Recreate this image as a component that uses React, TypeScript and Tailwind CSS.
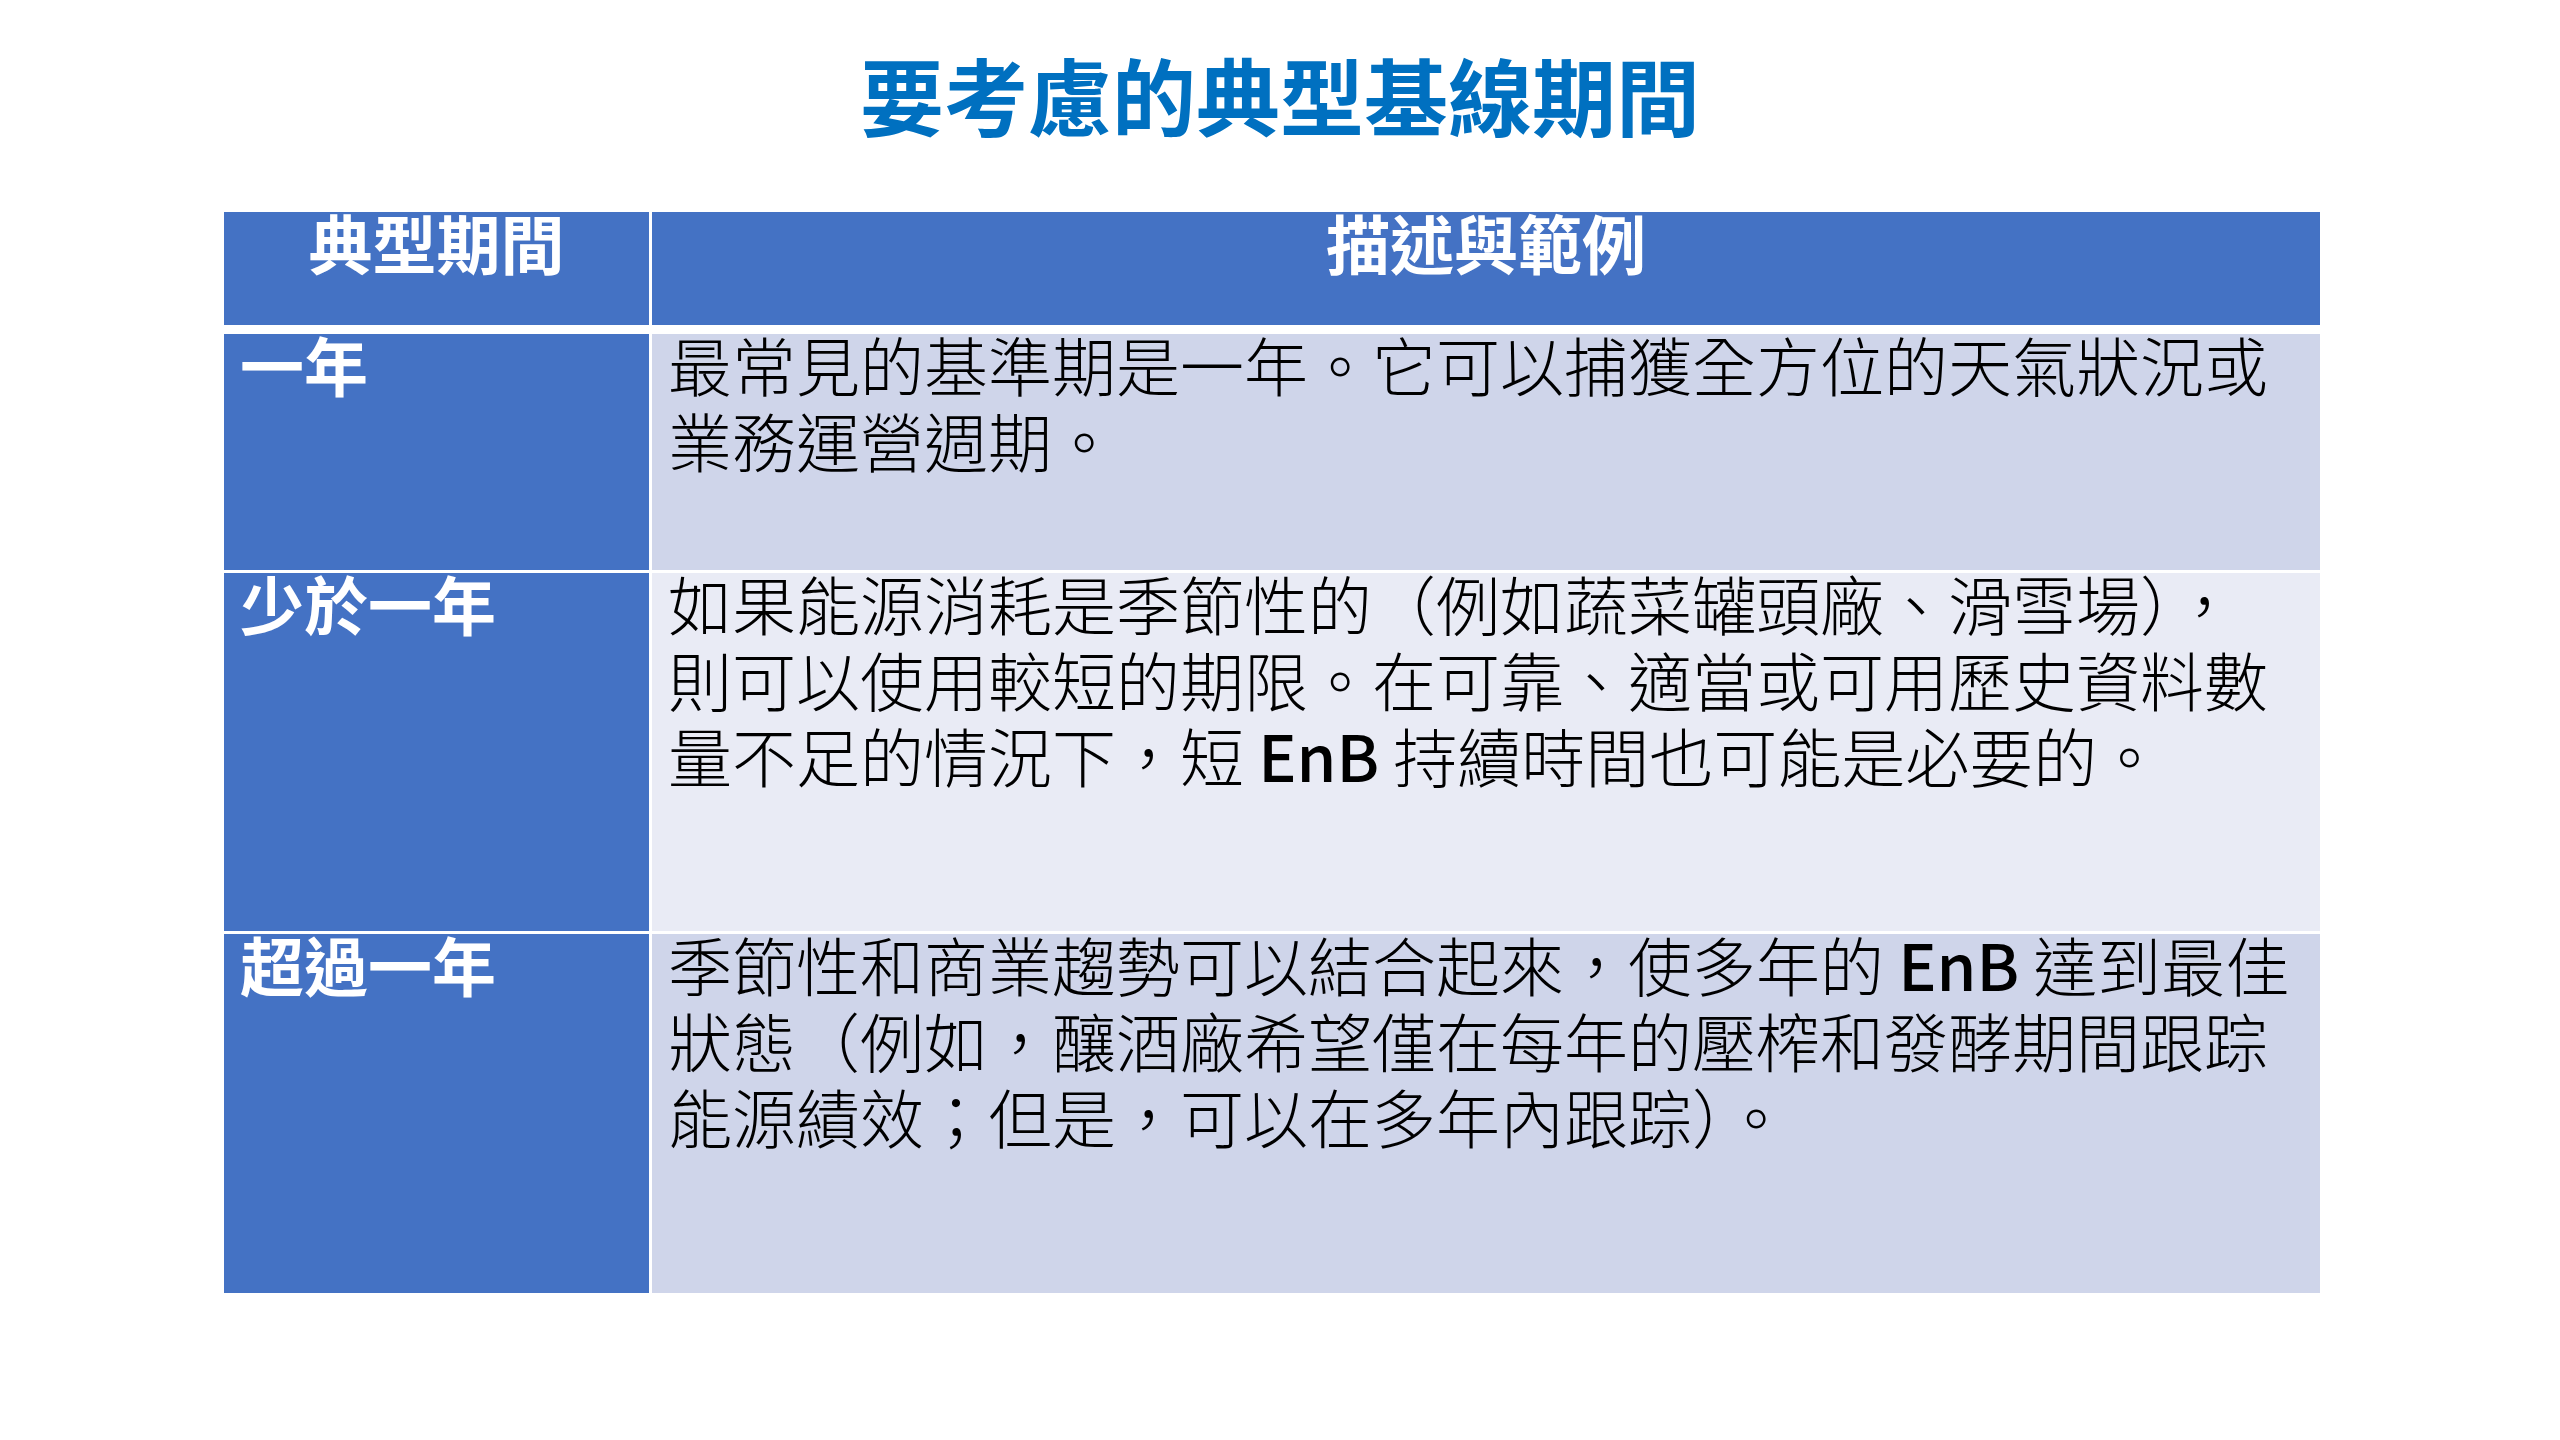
import React from "react";

const rows = [
  {
    label: "一年",
    bg: "bg-[#cfd5ea]",
    h: "h-[236px]",
    lines: [
      ["最常見的基準期是一年。它可以捕獲全方位的天氣狀況或"],
      ["業務運營週期。"],
    ],
  },
  {
    label: "少於一年",
    bg: "bg-[#e9ebf5]",
    h: "h-[358px]",
    lines: [
      ["如果能源消耗是季節性的（例如蔬菜罐頭廠、滑雪場），"],
      ["則可以使用較短的期限。在可靠、適當或可用歷史資料數"],
      ["量不足的情況下，短 ", "EnB", " 持續時間也可能是必要的。"],
    ],
  },
  {
    label: "超過一年",
    bg: "bg-[#cfd5ea]",
    h: "h-[359px]",
    lines: [
      ["季節性和商業趨勢可以結合起來，使多年的 ", "EnB", " 達到最佳"],
      ["狀態（例如，釀酒廠希望僅在每年的壓榨和發酵期間跟踪"],
      ["能源績效；但是，可以在多年內跟踪）。"],
    ],
  },
];

export default function App() {
  return (
    <div className="w-[2560px] h-[1440px] bg-white font-['Noto_Sans_CJK_TC',sans-serif] overflow-hidden">
      <h1 className="pt-[43px] pb-[10px] text-center text-[84px] leading-[101px] font-bold text-[#0070c0]">
        要考慮的典型基線期間
      </h1>
      <div className="ml-[224px] mt-[58px] w-[2096px] flex flex-col">
        <div className="flex h-[113px] gap-[3px]">
          <div className="w-[425px] bg-[#4472c4] text-center text-white font-bold text-[64px] leading-[68px]">
            <div className="-mt-[5px]">典型期間</div>
          </div>
          <div className="flex-1 bg-[#4472c4] text-center text-white font-bold text-[64px] leading-[68px]">
            <div className="-mt-[5px]">描述與範例</div>
          </div>
        </div>
        <div className="h-[9px]" />
        {rows.map((r, i) => (
          <div key={i} className={`flex gap-[3px] ${r.h} ${i > 0 ? "mt-[3px]" : ""}`}>
            <div className="w-[425px] bg-[#4472c4] px-4 text-white font-semibold text-[64px] leading-[76px]">
              <div className="-mt-[9px]">{r.label}</div>
            </div>
            <div className={`flex-1 ${r.bg} px-4 text-black font-light text-[64px] leading-[76px]`}>
              <div className="-mt-[9px]">
                {r.lines.map((parts, j) => (
                  <div key={j} className="whitespace-pre">
                    {parts.map((p, k) =>
                      p === "EnB" ? (
                        <span key={k} className="font-medium">
                          EnB
                        </span>
                      ) : (
                        <span key={k}>{p}</span>
                      )
                    )}
                  </div>
                ))}
              </div>
            </div>
          </div>
        ))}
      </div>
    </div>
  );
}
